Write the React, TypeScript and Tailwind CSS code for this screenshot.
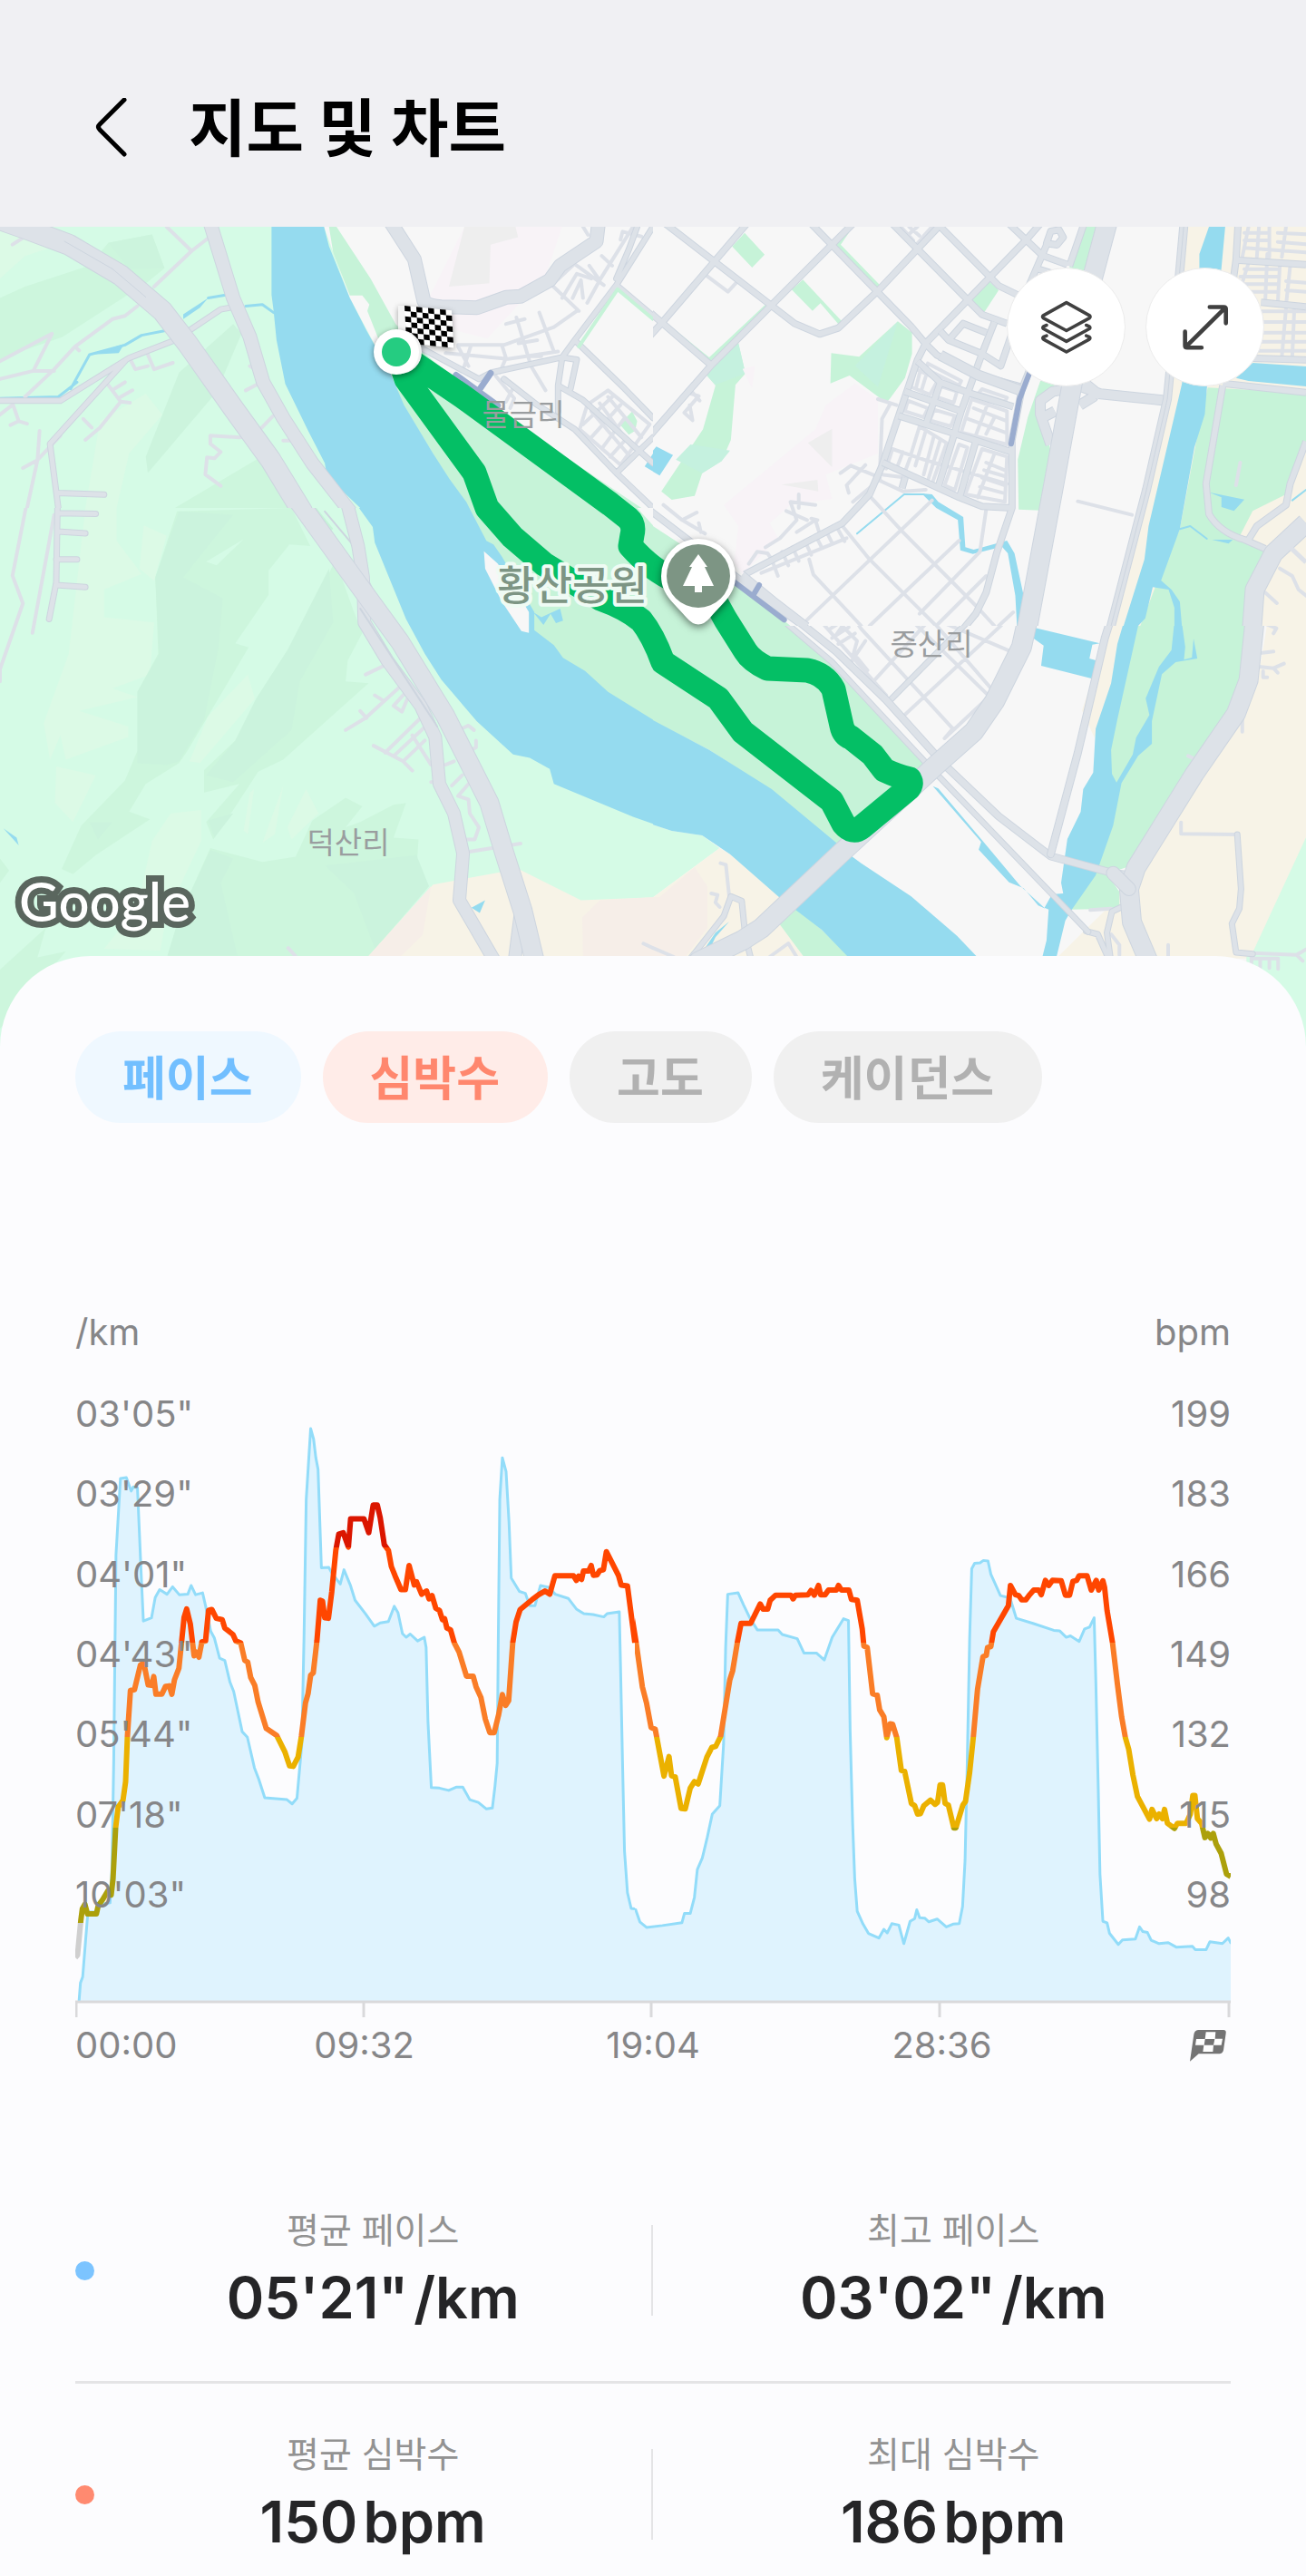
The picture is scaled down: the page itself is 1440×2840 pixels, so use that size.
import { useState } from "react";
import clsx from "clsx";

type Series = "pace" | "heart" | "altitude" | "cadence";

const CHIPS: { id: Series; label: string; on: string }[] = [
  { id: "pace", label: "페이스", on: "bg-[#eff8ff] text-[#72bfff]" },
  { id: "heart", label: "심박수", on: "bg-[#ffece8] text-[#ff876e]" },
  { id: "altitude", label: "고도", on: "bg-[#e9f7ec] text-[#5fbf77]" },
  { id: "cadence", label: "케이던스", on: "bg-[#f3eefe] text-[#9d7bea]" },
];

const PACE_TICKS = ["03'05\"", "03'29\"", "04'01\"", "04'43\"", "05'44\"", "07'18\"", "10'03\""];
const BPM_TICKS = ["199", "183", "166", "149", "132", "115", "98"];

const STATS = [
  {
    dot: "bg-[#7cc4ff]",
    items: [
      { label: "평균 페이스", value: "05'21\"", unit: "/km" },
      { label: "최고 페이스", value: "03'02\"", unit: "/km" },
    ],
  },
  {
    dot: "bg-[#ff8a70]",
    items: [
      { label: "평균 심박수", value: "150", unit: "bpm" },
      { label: "최대 심박수", value: "186", unit: "bpm" },
    ],
  },
];

// each half of the run is recorded in its own x scale, y is shared
const PACE_A =
  "66,1386 70,1345 76,1332 90,1192 114,1192 122,1175 150,1172 155,1100 160,860 166,420 178,255 194,253 207,282 213,273 224,275 234,460 240,563 262,556 272,512 284,495 304,505 319,489 337,506 360,505 369,486 381,506 400,502 408,530 422,585 432,600 446,643 460,648 474,695 484,715 507,802 521,814 540,880 552,905 568,945 628,949 642,958 655,946 668,830 674,600 680,300 692,147 700,170 706,210 712,235 721,448 741,447 750,460 772,483 782,452 800,487 812,518 840,547 864,574 880,567 902,564 918,531 928,545 940,590 950,598 961,591 981,606 999,598 1004,620 1009,780 1018,923 1040,924 1065,929 1085,922 1103,922 1122,949 1145,955 1167,969 1183,967 1190,920 1196,870 1199,600 1203,300 1210,210 1220,240 1228,350 1234,470 1256,499 1272,503 1284,530 1298,530 1313,486 1335,490 1353,505 1388,514 1410,537 1430,547 1455,549 1484,554 1493,547 1526,543 1529,650 1535,880 1540,1060 1548,1150 1558,1184 1568,1185";
const PACE_B =
  "0,543 6,543 12,840 20,1080 32,1184 46,1187 56,1213 72,1225 110,1221 157,1215 163,1195 177,1195 187,1160 194,1100 206,1075 218,1030 230,980 248,962 257,830 262,620 267,505 292,502 305,528 320,556 338,582 388,582 398,592 434,601 450,632 480,632 499,647 518,598 545,558 557,562 561,800 567,1000 572,1120 578,1190 592,1218 605,1238 630,1248 642,1229 650,1237 661,1217 678,1220 690,1260 705,1212 716,1206 721,1187 728,1204 740,1205 750,1213 770,1207 792,1224 808,1218 823,1217 831,1180 837,1080 842,880 848,600 853,450 860,438 873,437 881,432 892,433 899,462 912,488 922,508 945,513 960,557 1000,568 1050,583 1064,584 1080,598 1090,595 1111,607 1124,580 1136,576 1147,556 1151,690 1157,930 1161,1110 1168,1212 1178,1215 1184,1238 1205,1262 1215,1252 1246,1250 1256,1224 1264,1234 1275,1236 1284,1253 1303,1260 1325,1258 1345,1268 1383,1266 1390,1273 1416,1273 1425,1256 1455,1260 1469,1248 1476,1260";
const HEART_A =
  "56,1290 62,1285 71,1210 75,1185 82,1175 89,1196 113,1196 118,1178 130,1165 145,1145 153,1155 158,1120 165,1010 172,965 185,950 192,910 197,810 205,713 216,711 232,658 241,653 253,701 262,702 268,683 274,721 290,721 300,704 310,703 317,721 324,690 336,665 343,610 350,555 357,537 367,570 377,638 383,630 390,641 398,608 408,606 416,540 425,538 437,557 453,560 460,578 482,592 490,606 503,610 514,648 522,652 530,685 541,702 550,738 572,795 600,810 622,845 635,876 645,877 658,857 667,812 678,740 685,720 692,680 699,675 709,605 718,518 724,520 730,556 740,557 749,500 760,410 768,375 780,372 794,403 800,342 836,342 849,372 861,312 872,312 880,340 891,398 902,410 910,445 920,465 936,495 948,495 958,443 972,485 978,478 992,505 1005,498 1012,515 1020,508 1030,535 1040,540 1048,560 1054,558 1060,578 1070,582 1080,610 1093,630 1113,682 1131,682 1139,705 1152,728 1164,775 1176,804 1188,804 1200,765 1210,722 1219,745 1227,735 1238,610 1247,565 1258,538 1290,517 1308,506 1325,498 1338,505 1352,465 1402,465 1410,475 1416,466 1424,473 1429,455 1443,455 1450,443 1456,464 1466,463 1473,454 1483,452 1491,413 1524,465 1531,485 1548,487 1568,610";
const HEART_B =
  "0,455 10,485 25,487 47,609 62,705 72,740 83,793 93,797 104,850 114,898 126,856 132,897 141,900 155,968 165,969 177,924 187,910 196,915 217,857 229,836 238,834 250,812 272,690 279,670 290,610 299,568 322,568 345,526 352,537 363,537 369,518 382,507 419,507 424,515 430,507 460,506 467,497 475,507 485,486 490,506 501,506 509,496 528,496 533,486 540,496 558,496 564,516 578,518 590,580 594,617 602,620 615,720 626,723 632,755 642,770 649,815 657,785 663,786 673,815 684,886 692,888 708,957 716,962 723,980 730,979 738,962 754,950 765,959 771,955 777,917 783,917 789,957 797,961 810,1010 815,1010 832,960 838,953 848,890 857,812 867,710 880,640 888,637 891,620 899,618 905,586 941,530 946,486 958,506 966,508 973,517 983,517 991,507 1002,496 1014,496 1020,506 1030,475 1038,486 1047,475 1068,476 1078,507 1088,507 1096,477 1105,475 1111,465 1130,465 1140,496 1152,475 1158,496 1168,476 1172,490 1178,540 1191,609 1203,700 1213,770 1222,815 1230,840 1240,895 1251,942 1280,991 1286,970 1297,990 1303,980 1311,990 1316,970 1323,1000 1340,1011 1347,1000 1368,1000 1378,980 1384,940 1389,940 1395,990 1405,1000 1413,1031 1420,1022 1427,1032 1433,1022 1440,1045 1452,1065 1465,1110 1475,1115";

const HALVES = [
  { x: 0, width: 617, viewBox: "56 0 1512 1431", pace: PACE_A, heart: HEART_A, from: 66, to: 1568 },
  { x: 617, width: 657, viewBox: "44 0 1431 1431", pace: PACE_B, heart: HEART_B, from: 0, to: 1476 },
];

// heart rate zones, top to bottom
const ZONES = [
  { color: "#db1600", from: 0, to: 404 },
  { color: "#ff4600", from: 404, to: 609 },
  { color: "#fa7d27", from: 609, to: 814 },
  { color: "#ebb100", from: 814, to: 1010 },
  { color: "#aca00b", from: 1010, to: 1216 },
  { color: "#cfcfcf", from: 1216, to: 1431 },
];

const ROUTE =
  "M438 388 L510 437 L673 556 L692 571 Q700 578 697 590 L695 602 Q720 630 745 640 L790 665 L800 683 L822 718 Q828 728 846 737 L890 739 Q910 743 919 760 L928 800 Q930 810 938 813 L962 832 L975 849 Q990 856 1003 859 Q1006 864 1002 869 L950 912 Q940 920 930 908 L917 883 L819 807 L792 770 L731 730 Q720 700 707 684 Q690 670 662 660 L600 622 L565 592 L537 560 L523 521 L448 418 Z";

function Road({ d, w = 5 }: { d: string; w?: number }) {
  return (
    <>
      <path d={d} stroke="#cdd5df" strokeWidth={w + 2} />
      <path d={d} stroke="#dde2e8" strokeWidth={w} />
    </>
  );
}

function TileNW() {
  return (
    <>
      <rect y="700" width="1568" height="868" fill="#d5fbe6" />
      <path fill="#cdf6dd" d="M0 920 L60 885 L215 820 L260 750 L365 724 L395 828 L355 870 L150 1040 L60 1080 L0 1110Z M420 1568 L640 1400 L700 1568Z" />
      <path fill="#ccf4dd" d="M355 1460 L350 1410 L430 1150 L560 1000 L580 1030 L520 1210Z M260 750 L365 724 L395 828 L310 830Z" />
      <path fill="#dcfae6" d="M0 860 L60 790 L180 740 L100 700 H0Z M205 1568 L240 1300 L350 1215 L390 1280 L310 1400 L280 1568Z" />
      <path fill="#f7f7f7" d="M778 700 H1568 V1568 H1125 L940 1160 L840 920Z" />
      <path fill="#f8f3f7" d="M1115 700 H1350 L1310 850 L1170 1045 L1095 1020 L1030 920Z" />
      <path fill="#eee" d="M1115 700 H1238 L1244 732 L1178 755 L1175 874 L1078 885Z" />
      <path fill="#c6f3d8" d="M790 700 H808 L890 860 L950 1000 L1010 1080 L1110 1190 L1230 1300 L1540 1568 H1100 L1040 1400 L930 1170 L940 1110 L910 1050 L882 960 L887 940 L870 912 L840 912 L800 780Z M1488 1310 L1518 1270 L1530 1300 L1525 1330 L1510 1342Z" />
      <path fill="#95dbef" d="M652 700 H778 L790 760 L840 920 L880 1020 L940 1160 L970 1250 L1040 1400 L1080 1480 L1120 1550 L1127 1568 H865 L785 1470 L780 1430 L740 1330 L685 1185 L664 1050 L657 960 L652 910Z M1568 1400 L1548 1440 L1568 1455Z M215 1095 L298 1062 L285 1090Z M440 970 L500 920 L480 950 L440 985Z" />
      <path stroke="#95dbef" strokeWidth="3" d="M500 920 L545 910 M590 945 L630 940 L657 965 M170 1200 L215 1095 L300 1065 L340 1035 L400 1020 M0 1230 L140 1225 L185 1180" />
      <g stroke="#dde1e8" strokeWidth="4">
        <path d="M30 755 L60 730 M400 700 L460 775 L500 735 M460 775 L370 885 M330 945 L300 975 L270 985 L180 1070 L130 1140 L60 1225 M0 1115 L125 1030 L80 1145 H130 M0 1170 L80 1145 M180 1070 L190 1082 M355 1095 L370 1140 L415 1120 M315 1115 L325 1140 L355 1130 M255 1180 L290 1240 L240 1320 L205 1358 M290 1240 L312 1243 M200 1293 L220 1320 M275 1200 L300 1180 M290 1225 L318 1205 M30 1245 L45 1300 L25 1312 M45 1300 L65 1308 M0 1280 L30 1250 M95 1330 L90 1420 L55 1445 M90 1420 L65 1568 M145 1345 L90 1420 M655 1285 L610 1345 L575 1350 L505 1345 V1370 L530 1395 L515 1415 L497 1412 L493 1465 L530 1500 M590 1205 L620 1185 M600 1130 L612 1140 M680 1360 H705" />
        <path d="M1380 815 L1450 880 M1325 880 L1390 960 M1375 820 L1325 880 M1350 920 L1385 845 L1420 860 M1375 920 L1395 865 L1400 920 M1400 700 L1412 725 M1445 790 L1470 820 M1415 820 L1440 865 M1520 700 L1440 865 L1410 935 M1490 740 L1495 715 L1540 730 M1100 1065 L1210 1065 L1330 1010 L1385 960 M1070 1090 L1220 1108 L1340 1085 M1100 1070 L1125 1130 M1130 1070 L1115 1130 M1205 1065 L1215 1105 L1200 1150 M1240 980 L1275 1130 L1310 1205 M1295 965 L1330 1085 M1215 1000 L1260 985 M1245 1060 L1290 1050 M1270 1100 H1300" />
        <path d="M1410 1250 L1460 1205 L1560 1310 L1490 1435 L1392 1325Z M1420 1270 L1510 1405 M1440 1245 L1520 1385 M1460 1225 L1540 1350 M1400 1310 L1470 1225 M1420 1350 L1490 1250 M1445 1385 L1500 1290 M1465 1410 L1500 1360" />
        <path d="M1190 1160 L1235 1230 L1225 1260 M1235 1190 L1215 1240" />
      </g>
      <Road w={5} d="M0 1237 H145 L310 1105 L420 1050 L530 955 L560 948 M300 1115 L120 1370 L140 1568 M140 1522 L250 1527" />
      <Road w={5} d="M1005 1070 L1150 1170 L1180 1150 L1350 1103 L1380 1050 L1480 880 L1568 700 M1350 1103 L1340 1190 L1400 1235 L1568 1430 M1480 880 L1568 975 M1380 1050 L1500 1200 L1568 1290 M1210 1170 L1290 1250 L1380 1325 L1480 1460 L1568 1568 M1480 1460 L1568 1350 M1350 1103 L1385 1110 L1370 1200 M1480 860 L1510 770 L1530 700 M1340 1190 V1270" />
      <path stroke="#c6f3d8" strokeWidth="4" d="M1390 1070 L1483 893 L1568 985" />
      <Road w={22} d="M-40 660 L60 705 L165 755 L290 850 L390 960 L450 1060 L560 1260 L650 1420 L725 1578" />
      <path stroke="#cdd5df" strokeWidth="1" d="M155 745 L270 830 L350 917" />
      <Road w={14} d="M505 690 L560 920 L600 1040 L632 1180 L680 1290 L750 1430 L840 1578" />
      <Road w={14} d="M940 690 L995 800 L1018 930 Q1030 945 1060 947 L1145 950 L1215 918 L1250 915 L1320 865 L1345 820 L1432 745 L1437 690" />
      <path stroke="#9aaccf" strokeWidth="7" d="M1095 1158 L1195 1252 M1150 1205 L1178 1152" />
    </>
  );
}

function TileNE() {
  return (
    <>
      <rect y="30" width="1568" height="1320" fill="#f7f7f7" />
      <path fill="#f7f3e7" d="M1285 30 H1568 V1350 H1100 L1200 800 L1240 520Z" />
      <path fill="#c6f3d8" d="M1332 562 L1568 580 V760 L1520 915 L1440 970 L1410 1050 L1465 1095 V1140 L1425 1230 L1420 1350 H1170 L1215 1190 L1265 1030 L1310 700Z M0 1020 L200 1200 L330 1350 H0Z" />
      <path fill="#c6f3d8" d="M190 95 L220 50 L268 122 L238 165Z M333 238 L360 205 L455 345 L445 352 L402 283 L383 308Z M760 270 L805 208 L830 240 L793 318Z M428 448 L495 460 L588 343 L622 380 V450 L605 530 L568 600 L560 612 L472 522 L426 548Z M128 520 L205 415 L222 515 L198 553 L187 735 L165 805 L118 845 L100 920 L45 933 L20 905 L120 700 L150 555Z M1030 30 H1070 L1035 180 L1000 165Z M930 540 L980 540 L920 600 L955 770 L930 968 L878 965 L876 800 L900 660Z" />
      <path fill="#c5f1df" d="M588 343 L540 560 L485 490Z M205 415 L222 515 L150 553 L128 520Z M90 750 L185 770 L165 805 L118 845 L55 800Z" />
      <path fill="#f8f3f7" d="M485 548 L540 600 V780 L415 850 L430 930 L330 950 L280 1010 L300 1060 L215 1180 L195 1140 L205 1020 L170 950 L390 700 L415 620Z M215 500 L245 490 L238 565Z" />
      <path fill="#eee" d="M372 745 L430 698 V825Z M308 883 L395 867 L397 905Z" />
      <path stroke="#c6f3d8" strokeWidth="4" d="M475 30 L445 90 L540 225 M0 320 L135 470 L270 295" />
      <path fill="#95dbef" d="M1335 30 H1374 L1365 165 L1330 564 L1325 650 L1300 760 L1265 1030 L1220 1200 L1245 1230 L1265 1270 L1270 1350 H1252 L1252 1290 L1238 1230 L1200 1222 L1182 1325 L1165 1350 H1130 L1180 1130 L1190 1020 L1270 550 L1312 165 V120Z M1400 530 L1440 480 L1568 492 V558 L1430 540Z M0 770 L8 757 L48 785 L16 853 L0 840Z M1335 908 L1420 932 L1395 970 L1365 957 V925Z M1342 1065 H1392 L1382 1078Z M645 912 L670 915 L685 940 L745 990 L750 1090 L770 1098 L850 1068 L868 1110 L890 1250 L882 1350 H874 L870 1250 L852 1110 L838 1088 L768 1112 L738 1100 L732 1000 L680 960Z" />
      <path stroke="#95dbef" strokeWidth="2" d="M490 1045 L603 915 H650 M1265 1030 L1290 1020 L1330 1062 M1535 935 L1568 900" />
      <g stroke="#dde1e8" strokeWidth="4">
        <path d="M127 190 L180 245 L200 215 M90 570 L112 605 M85 580 L110 590 L75 645 L95 670 L88 620 M540 600 L585 620 M568 620 L550 665 L545 830 M450 845 L475 820 L545 860 M510 818 L465 885 L470 910 M545 865 L480 940 M25 950 L70 1000 L105 975 M70 1000 L125 1045 M110 1010 L115 1040 M230 1145 L250 1105 L275 1110 L285 1130 M270 1090 L305 1060 L345 1000 L330 940 L390 950 M350 915 V960 M320 970 L370 1000 M345 1040 L390 1000 L400 1045 M380 995 L395 1000" />
        <path d="M260 1175 L465 1060 M285 1130 L300 1185 M310 1105 L325 1150 M335 1090 L350 1135 M365 1070 L380 1115 M390 1050 L405 1090 M415 1035 L430 1075 M440 1020 L460 1070" />
        <path d="M455 1020 L520 1130 L680 1350 M520 920 L600 1040 L780 1290 L820 1350 M670 935 L370 1330 M735 1068 L520 1350 M800 1185 L680 1350 M375 1130 L385 1180 L500 1350 M800 965 L785 1105 L640 1310 M865 1305 L830 1350 M595 30 L625 75 M615 30 L640 60 M650 60 L670 30 M610 60 L635 30 M635 85 L665 40" />
        <path d="M630 500 L620 560 L665 585 L685 535Z M640 515 L632 560 M655 525 L645 570 M660 482 L740 540 L735 555 L655 500Z M685 555 L730 575 L722 612 L675 590Z M612 605 L660 630 L650 660 L605 640Z M675 635 L725 655 L715 690 L665 670Z M765 600 L850 640 V750 L740 710Z M805 610 L775 720 M770 630 L845 670 M755 665 L845 710 M820 660 L800 715 M790 567 L850 595 L845 608 L782 580Z M640 690 L705 745 L670 880 M640 690 L620 780 M655 705 L630 820 M675 720 L650 850 M690 735 L660 870 M575 765 L650 800 L850 880 M575 765 L560 830 M600 775 L585 830 M620 785 L605 840 M735 750 L755 760 L725 900 L700 885Z M790 765 L850 790 L845 940 L750 915Z M820 780 L780 925 M800 810 L845 835 M795 835 L845 855 M790 860 L845 885 M785 890 L840 910 M550 850 L610 860 M545 870 L600 905 L655 900" />
        <path d="M1430 30 L1415 130 M1455 30 L1450 130 M1480 30 V130 M1520 30 L1510 130 M1420 50 H1475 M1420 75 H1475 M1420 100 L1568 115 M1500 50 L1568 55 M1500 80 L1568 88 M1430 150 L1400 280 M1475 120 L1470 280 M1505 160 L1500 290 M1530 160 L1520 290 M1420 170 H1500 M1410 195 H1500 M1410 220 H1500 M1405 245 H1500 M1520 210 L1568 215 M1520 240 L1568 245 M1520 300 L1510 460 M1460 310 H1568 M1460 345 H1568 M1455 380 H1568 M1450 410 H1568 M1450 440 H1568 M1540 300 L1535 460 M1410 810 L1400 885 M1020 938 L1150 983" />
      </g>
      <path stroke="#dde1e8" strokeWidth="4" d="M1505 1160 L1535 1185 L1550 1230 L1568 1250 M1470 1240 L1498 1275" />
      <g strokeLinecap="butt">
        <Road w={6} d="M30 20 L340 350 L400 385 L445 365 L540 242 L720 -20 M225 20 L20 350 L-10 395 M-10 310 L140 488 M-10 725 L140 488 L480 20 M380 20 L620 360 L655 418 L682 455 L780 520 L885 560 M575 20 L790 320 L850 350 M690 30 L830 225 L875 255 M855 20 L935 125 L995 155 M930 20 L895 75 L655 415 L635 470 L550 820 L520 915 L455 1010 L220 1180 M1035 20 L1000 160 M955 45 L975 40 L985 65 L970 90 L945 85Z M945 90 L895 250 M925 170 L960 185" />
        <Road w={6} d="M552 810 L735 925 L790 955 L862 960 M862 740 V960 L825 1110 L800 1240 L775 1310 L745 1360 M905 500 L885 570 L860 750 M635 475 L690 545 L760 580 L865 625 M605 575 L740 640 M590 655 L862 775 M690 545 L655 685 M820 345 L790 450 L740 640 L685 890 M775 740 L735 930 M690 375 L710 405 L790 450 L835 490 L860 390 M710 405 L745 350 L800 380 M605 860 L598 895 M-10 965 L240 1230 L370 1360 M215 1180 L290 1265 L370 1350 M1405 20 L1400 140 L1568 155 M1400 140 L1390 240 M1460 280 L1568 295 M1440 465 L1568 470 M1368 548 L1568 578 M1368 555 L1328 880 L1335 980 Q1360 1040 1420 1065 L1470 1095 M1430 1065 L1450 1020 L1520 950 L1530 880 L1568 740" />
        <Road w={10} d="M690 455 L780 520 L880 570" />
        <Road w={10} d="M1030 560 L1075 583 L1232 605 M1025 620 L1060 590 M1000 565 L960 575 L930 605 V650 L955 750 M965 640 L930 665 M1030 540 L1075 590" />
        <Road w={8} d="M1275 20 L1262 220 L1235 600 L1185 900 L1098 1360" />
        <path stroke="#cdd5df" strokeWidth="1" d="M1275 20 L1262 220 L1235 600 L1185 900 L1098 1360" />
        <Road w={21} d="M1090 20 L1055 200 L1005 560 L960 900 L898 1360" />
        <Road w={20} d="M1568 1010 L1490 1110 L1445 1230 L1438 1360" />
        <path stroke="#dde1e8" strokeWidth="5" d="M1530 1090 L1568 1140" />
      </g>
      <path stroke="#9aaccf" strokeWidth="6" d="M905 510 L880 600 L860 748 M195 1205 L315 1330 M240 1250 L255 1215" />
    </>
  );
}

function TileSW() {
  return (
    <>
      <rect width="1568" height="1568" fill="#d5fbe6" />
      <path fill="#dcfae6" d="M205 0 H280 V95 L340 190 L250 235 V315 L370 330 L360 480 L270 520 L330 545 L190 585 L308 630 V660 L158 725 L145 655 L120 725 L105 620 L165 420Z M595 480 L612 550 L480 735 L455 730 L500 600Z M410 880 L483 870 V960 L400 1170 L385 1275 L250 1270 L330 1150 L365 960Z M135 745 L230 770 L175 905 L132 850Z M345 50 L400 80 L370 210 L335 175Z" />
      <path fill="#cdf6dd" d="M425 10 L700 0 L745 110 L695 105 L645 180 V250 L565 390 L597 402 L450 700 L430 735 L350 795 L310 875 L360 897 L230 1000 L175 1055 L148 1040 L195 915 L300 785 L330 700 V530 L380 420 L373 200Z M805 150 L850 300 L870 360 L835 440 L830 500 L885 505 L680 725 L620 760 L560 870 L512 955 L495 905 L575 795 L490 820 V755 L565 670 L615 550 L690 410 L720 370Z M505 980 L630 1020 L710 1005 L750 900 L830 835 L870 860 L830 920 L865 905 L945 855 L975 850 L945 950 L1005 955 L1000 1045 L1030 1090 L885 1295 H402 L430 1180Z M0 1010 L22 1045 L0 1080Z M0 1330 L110 1210 L90 1295 L158 1278 L0 1500Z" />
      <path fill="#cbf3dd" d="M430 10 L560 20 L440 200 L535 260 L525 400 L490 610 L430 730 L400 740 L330 735 V530 L382 420 L373 200Z M790 175 L800 330 L720 500 L700 640 L560 790 L495 770 L565 670 L615 550 L690 410Z M505 985 L560 1010 L530 1080 L570 1290 H402 L430 1180Z M215 905 L270 905 L235 955Z M780 1030 L1000 1000 L1030 1090 L900 1270 L850 1110Z M500 900 L560 880 L515 950Z" />
      <path fill="#d5fbe6" d="M495 155 L585 90 L520 165Z" />
      <path fill="#dcfae6" d="M600 820 L610 810 L595 940 L585 930Z M680 800 L660 940 L630 965Z M735 810 L765 880 L700 955 L690 920Z" />
      <path fill="#f7f3e7" d="M882 1295 L1040 1085 L1245 1040 L1395 1130 L1568 1122 V1300Z" />
      <path fill="#f6eee8" d="M882 1295 L1035 1090 L1015 1230 L960 1295Z M1398 1180 L1440 1130 L1568 1122 V1295 H1400Z" />
      <path fill="#c6f3d8" d="M1125 0 H1568 V615 L1460 532 L1283 400 L1150 60Z M760 0 L800 60 L790 70 L750 0Z" />
      <path fill="#95dbef" d="M862 0 H1127 L1168 95 L1185 105 L1205 140 L1283 300 V352 L1330 395 L1352 432 L1405 470 L1460 530 L1568 610 V910 L1520 890 L1330 795 L1320 752 L1272 720 L1232 710 L1145 615 L1060 495 L1020 420 L975 320 L900 100 L895 55Z M1280 300 L1300 315 L1345 290 L1352 325 L1335 332 L1322 305 L1305 337Z M8 923 L40 950 L45 972Z M1132 1152 L1165 1130 L1152 1167Z" />
      <path fill="#f7f7f7" d="M1162 125 L1195 160 L1240 240 L1270 300 V360 L1252 355 L1205 270 L1165 175Z M1530 0 H1568 V50Z" />
      <g stroke="#dde1e8" strokeWidth="4">
        <path d="M62 0 L30 195 L55 275 L0 465 V500 M130 20 L78 360 M930 450 L878 480 M965 510 L878 605 L830 640 M900 540 L920 555 M865 585 L880 605 M975 530 L945 570 L965 587 L980 545 M1010 605 L925 705 M1030 620 L945 715 M1020 670 L968 730 M897 685 L968 730 L990 757 M990 655 L1035 740 M1110 635 L1125 627 L1138 640 M1143 670 V690 L1120 705 L1140 718 M1070 740 L1090 730 M1110 770 L1085 800 M1035 790 H1050 M1125 795 L1100 830 L1125 840 L1128 880 L1150 920 L1140 955 H1120 M1130 990 L1250 967 M692 1268 L710 1292 M1545 1255 L1568 1268" />
        <path stroke="#cdd5df" strokeWidth="2" d="M780 10 L850 110 L880 200 L935 330 M965 385 L1110 640" />
      </g>
      <Road w={5} d="M138 0 L135 215 L118 320 M140 15 L230 17 M140 68 L205 73 M135 148 H185 M135 222 L205 228" />
      <Road w={13} d="M832 -20 L860 110 L872 200 L875 330 L930 440 L1010 570 L1045 660 L1055 795 L1090 880 L1112 995 L1103 1130 L1190 1310 M1250 1170 L1235 1310" />
      <Road w={20} d="M710 -30 L860 220 L960 385 L1070 600 L1175 850 L1210 990 L1255 1160 L1285 1310" />
      <path stroke="#cdd5df" strokeWidth="2" d="M865 290 L1050 630" />
    </>
  );
}

function TileSE() {
  return (
    <>
      <rect y="150" width="1568" height="1410" fill="#f7f7f7" />
      <path fill="#d5fbe6" d="M0 808 L45 828 L118 843 L160 885 L0 1048Z" />
      <path fill="#f7f3e7" d="M160 885 L185 905 L345 1090 L305 1135 L365 1250 H0 V1048Z M1480 100 L1450 350 L1090 1085 L968 1250 H1568 V100Z M1128 100 L1098 150 L1030 430 L1060 520 L1170 100Z" />
      <path fill="#f6eee8" d="M0 1048 L15 1048 L100 948 L130 1010 V1150 L75 1250 H0Z" />
      <path fill="#d5fbe6" d="M1568 850 L1440 1230 L1425 1245 V1560 H1568Z" />
      <path fill="#c6f3d8" d="M0 100 H285 L430 270 L662 610 L450 880 L280 690 L135 560 L0 465Z M345 1085 L405 1155 L475 1250 H365 L303 1135Z M1165 100 H1430 L1410 320 L1375 440 L1300 590 L1150 920 L1145 945 L1090 970 L1120 1030 V1085 L1000 1088Z" />
      <path fill="#95dbef" d="M0 462 L135 560 L285 690 L390 810 L447 875 L480 915 L500 935 L620 1045 L730 1175 L782 1250 H472 L405 1155 L305 1050 L185 905 L118 843 L45 828 L0 808Z M1160 0 L1115 210 L1100 340 L1063 490 L1057 635 L1033 690 L1027 765 L995 855 L980 1000 L985 1035 L958 1038 L940 1082 L950 1088 L945 1190 L934 1250 H968 L990 1125 L1005 1090 L1063 975 L1105 810 L1125 670 L1165 580 L1198 540 V465 L1222 310 L1255 270 L1307 258 L1298 192 L1294 255 L1275 262 L1278 220 L1262 60Z M918 157 L1073 208 L1055 212 L1048 258 L1065 265 L1055 325 L932 282 L938 215 L912 190Z M672 680 L685 688 L792 862 L882 1010 L942 1085 L925 1075 L890 1018 L855 998 L782 890 L788 865Z M122 1222 L150 1165 L183 1128 L150 1180 L135 1222Z M868 100 H882 V130Z" />
      <path fill="#c6f3d8" d="M1240 30 L1255 95 L1245 230 L1215 285 L1183 390 L1192 445 L1160 520 L1152 575 L1113 668 L1102 640 L1100 560 L1115 460 L1165 150 L1182 125 L1200 20Z" />
      <g stroke="#dde1e8" strokeWidth="4">
        <path d="M470 100 L500 160 L720 490 L700 522 L810 380 M630 100 L860 235 M650 100 L820 370 M560 380 L400 130 M870 105 L600 450 M690 90 L525 340 M590 90 L820 400 M425 160 L465 125 M430 190 L470 155 M445 210 L485 175 M440 130 L490 200 L480 250 M465 130 L440 180 M510 200 L475 270 M490 255 L515 297 M365 130 L390 100" />
        <path d="M1470 50 L1498 75 M1465 140 L1497 158 L1490 175 M1458 240 L1490 235 M1455 285 L1490 290 L1515 275 M1490 290 L1500 305 M1465 300 V320 H1475 M1415 460 V500 M1285 580 L1300 590 M1268 800 V838 L1400 840 M1237 1205 V1245 M162 935 L175 940 L183 1045 M140 1035 L155 1040 L150 1065 L160 1080 M280 1245 L325 1200 L345 1245 M0 1215 L50 1245 M1100 1170 L1120 1205 V1240 M1050 1090 L1100 1085 M1440 1232 L1545 1238 L1568 1220 M1545 1238 L1560 1258 M1437 1235 V1265 M1458 1250 V1280 M1480 1250 V1282 M1501 1250 V1285 M1437 1250 H1501" />
      </g>
      <Road w={5} d="M570 395 L775 110 L790 60 M1403 840 L1412 1020 L1408 1085 L1390 1135 L1400 1230 L1440 1235 M90 1250 L170 1110 L187 1045 L213 1060 L222 1180 L235 1250 M1125 1080 L1102 1095 L1090 1165 L1098 1245 M1040 1160 L1068 1170 L1092 1245" />
      <Road w={5} d="M285 100 L430 270 L660 610 L960 1040 L1045 1162" />
      <Road w={7} d="M255 30 L440 235 L560 395 L700 610 L830 780 L955 912 L1105 968 L1150 975" />
      <Road w={7} d="M1128 0 L1085 190 L1020 570 L955 905" />
      <Road w={21} d="M920 0 L885 220 L820 400 L770 500 L680 610 L460 890 L260 1150 L215 1190 L110 1260" />
      <Road w={20} d="M1455 0 L1430 330 L1400 440 L1300 640 L1160 950 L1143 1020 L1150 1130 L1190 1260" />
      <Road w={14} d="M1105 968 L1143 1020" />
    </>
  );
}

const TILES = [
  { x: 0, y: 250, w: 720, h: 310, viewBox: "0 700 1568 868", Tile: TileNW },
  { x: 720, y: 250, w: 720, h: 440, viewBox: "0 30 1568 1320", Tile: TileNE },
  { x: 0, y: 560, w: 720, h: 600, viewBox: "0 0 1568 1568", Tile: TileSW },
  { x: 720, y: 690, w: 720, h: 470, viewBox: "0 150 1568 1410", Tile: TileSE },
];

function FinishFlag() {
  const cells = [];
  for (let row = 0; row < 7; row++) {
    for (let col = 0; col < 8; col++) {
      if ((row + col) % 2 === 0) {
        cells.push(<rect key={`${row}-${col}`} x={col * 6.5} y={row * 6.3} width="6.5" height="6.3" />);
      }
    }
  }
  return (
    <g className="drop-shadow-[0_2px_3px_rgb(0_0_0/0.35)]">
      <path d="M439 337 H447 V390 H439Z" fill="#f4f4f4" />
      <g transform="matrix(1 .1 .05 .94 446 337)">
        <rect width="52" height="44" fill="#fff" />
        {cells}
      </g>
    </g>
  );
}

function RouteMap() {
  return (
    <svg
      viewBox="0 250 1440 910"
      role="img"
      aria-label="지도"
      className="block w-full font-['Noto_Sans_CJK_KR','Noto_Sans',sans-serif] [&_path]:[vector-effect:non-scaling-stroke]"
    >
      {TILES.map(({ x, y, w, h, viewBox, Tile }) => (
        <svg
          key={viewBox}
          x={x}
          y={y}
          width={w}
          height={h}
          viewBox={viewBox}
          preserveAspectRatio="none"
          fill="none"
          strokeLinecap="round"
          strokeLinejoin="round"
        >
          <Tile />
        </svg>
      ))}

      <path d={ROUTE} fill="none" stroke="#04bf65" strokeWidth="27" strokeLinejoin="round" />

      <g fontSize="33" fill="#9a9d9f" textAnchor="middle">
        <text x="577" y="469">물금리</text>
        <text x="1027" y="722">증산리</text>
        <text x="384" y="941">덕산리</text>
      </g>
      <text
        x="631"
        y="662"
        fontSize="45"
        fontWeight="500"
        fill="#7d9584"
        stroke="#effbf4"
        strokeWidth="8"
        strokeLinejoin="round"
        paintOrder="stroke"
        textAnchor="middle"
      >
        황산공원
      </text>

      <FinishFlag />
      <g className="drop-shadow-[0_2px_3px_rgb(0_0_0/0.45)]">
        <circle cx="441" cy="388" r="24" fill="#f1f1f1" />
        <circle cx="437" cy="388" r="25" fill="#fff" />
        <circle cx="437" cy="388" r="16" fill="#25cc81" />
      </g>

      <g className="drop-shadow-[0_3px_4px_rgb(0_0_0/0.5)]">
        <path d="M770 594 A41 41 0 0 1 811 635 C811 657 794 667 783 681 Q770 696 757 681 C746 667 729 657 729 635 A41 41 0 0 1 770 594Z" fill="#fff" />
        <circle cx="770" cy="635" r="35" fill="#7d9584" />
        <path d="M770 611 L780 625 H777 L787 646 H774 V653 H766 V646 H753 L763 625 H760Z" fill="#fff" />
      </g>

      <text
        x="21"
        y="1016"
        fontSize="60"
        fontWeight="500"
        fill="#fff"
        stroke="#5a665e"
        strokeWidth="14"
        paintOrder="stroke"
        className="font-['Lato',sans-serif]"
      >
        Google
      </text>
    </svg>
  );
}

function Chart({ active }: { active: Series[] }) {
  return (
    <svg viewBox="0 0 1274 730" preserveAspectRatio="none" className="block h-[730px] w-full" aria-hidden="true">
      {HALVES.map((half, i) => (
        <svg
          key={half.viewBox}
          x={half.x}
          y="1"
          width={half.width}
          height="730"
          viewBox={half.viewBox}
          preserveAspectRatio="none"
          fill="none"
          strokeLinejoin="round"
        >
          <defs>
            <linearGradient id={`zones-${i}`} gradientUnits="userSpaceOnUse" x1="0" x2="0" y1="0" y2="1431">
              {ZONES.flatMap((zone) => [
                <stop key={`${zone.color}-a`} offset={zone.from / 1431} stopColor={zone.color} />,
                <stop key={`${zone.color}-b`} offset={zone.to / 1431} stopColor={zone.color} />,
              ])}
            </linearGradient>
          </defs>
          {active.includes("pace") && (
            <>
              <polygon points={`${half.from},1386 ${half.pace} ${half.to},1386`} fill="#dff3fe" />
              <polyline points={half.pace} stroke="#92dcf9" strokeWidth="3" className="[vector-effect:non-scaling-stroke]" />
            </>
          )}
          {active.includes("heart") && (
            <polyline
              points={half.heart}
              stroke={`url(#zones-${i})`}
              strokeWidth="6"
              className="[vector-effect:non-scaling-stroke]"
            />
          )}
        </svg>
      ))}
      <path d="M0 708 H1274 M1 708 V725 M318 708 V725 M635 708 V725 M953 708 V725 M1272 708 V725" stroke="#d9d9db" strokeWidth="3" />
    </svg>
  );
}

export default function App() {
  const [active, setActive] = useState<Series[]>(["pace", "heart"]);

  const toggle = (id: Series) =>
    setActive((prev) => (prev.includes(id) ? prev.filter((s) => s !== id) : [...prev, id]));

  return (
    <div className="min-h-screen bg-[#fcfcfe] font-['Inter','Noto_Sans_CJK_KR',sans-serif]">
      <header className="flex items-center bg-[#f0f0f3] pt-24 pb-[62px] pl-[104px]">
        <button type="button" aria-label="뒤로" className="mr-[68px]">
          <svg width="36" height="68" viewBox="0 0 36 68" fill="none" stroke="#000" strokeWidth="5" strokeLinecap="round" strokeLinejoin="round">
            <path d="M33 2 L6 29 Q3 32 6 35 L33 62" />
          </svg>
        </button>
        <h1 className="text-[69px] leading-[92px] font-bold text-black">지도 및 차트</h1>
      </header>

      <main>
        <section className="relative">
          <RouteMap />
          <div className="absolute top-[45px] right-[46px] flex gap-[22px]">
            <button type="button" aria-label="지도 유형" className="flex size-[131px] items-center justify-center rounded-full border border-[#ececec] bg-white">
              <svg width="58" height="61" viewBox="141 150 175 184" fill="none" stroke="#404040" strokeWidth="11" strokeLinecap="round" strokeLinejoin="round">
                <path d="M228 161 L305 204 Q309 208 305 212 L228 254 L151 212 Q147 208 151 204Z" />
                <path d="M162 236 L152 240 Q147 244 152 248 L228 290 L304 248 Q309 244 304 240 L294 236" />
                <path d="M162 271 L152 275 Q147 279 152 283 L228 325 L304 283 Q309 279 304 275 L294 271" />
              </svg>
            </button>
            <button type="button" aria-label="전체 화면" className="flex size-[131px] items-center justify-center rounded-full border border-[#ececec] bg-white">
              <svg width="54" height="54" viewBox="605 162 163 162" fill="none" stroke="#404040" strokeWidth="14" strokeLinecap="round" strokeLinejoin="round">
                <path d="M701 175 H748 Q755 175 755 182 V229 M619 257 V303 Q619 310 626 310 H674 M751 179 L623 306" />
              </svg>
            </button>
          </div>
        </section>

        <section className="relative -mt-[106px] rounded-t-[100px] bg-[#fcfcfe] pt-[83px]">
          <div className="flex gap-6 px-[83px]">
            {CHIPS.map(({ id, label, on }) => (
              <button
                key={id}
                type="button"
                aria-pressed={active.includes(id)}
                onClick={() => toggle(id)}
                className={clsx(
                  "rounded-full pt-[15px] pr-[53px] pb-[10px] pl-[52px] text-[52px] leading-[76px] font-bold whitespace-nowrap",
                  active.includes(id) ? on : "bg-[#f0f0f0] text-[#b1b1b1]"
                )}
              >
                {label}
              </button>
            ))}
          </div>

          <div className="mt-[207px] px-[83px] text-[40px] text-[#868688]">
            <div className="flex justify-between leading-[48px]">
              <span>/km</span>
              <span>bpm</span>
            </div>
            <div className="relative mt-[6px]">
              <Chart active={active} />
              <div className="absolute inset-x-0 top-4 flex h-[618px] justify-between leading-[88px]">
                <ul className="flex flex-col justify-between">
                  {PACE_TICKS.map((tick) => (
                    <li key={tick}>{tick}</li>
                  ))}
                </ul>
                <ul className="flex flex-col justify-between text-right">
                  {BPM_TICKS.map((tick) => (
                    <li key={tick}>{tick}</li>
                  ))}
                </ul>
              </div>
            </div>
            <div className="grid grid-cols-8 text-center leading-[52px]">
              <span className="text-left">00:00</span>
              <span className="col-span-2">09:32</span>
              <span className="col-span-2">19:04</span>
              <span className="col-span-2">28:36</span>
              <svg width="42" height="36" viewBox="36 50 126 108" className="mr-1 self-center justify-self-end">
                <path fill="#747474" d="M66 53 H150 Q160 53 158 64 L150 120 Q147 132 136 132 H68 L39 157 L52 68 Q54 54 66 53Z" />
                <path fill="#fff" d="M92 60 H124 L122 82 H147 L143 103 H117 L115 125 H82 L85 103 H57 L60 83 H89Z" />
                <path fill="#747474" d="M89 83 H121 L117 103 H86Z" />
              </svg>
            </div>
          </div>

          <div className="mt-[100px]">
            {STATS.map(({ dot, items }, i) => (
              <div key={dot}>
                {i > 0 && <hr className="mx-[83px] border-0 border-t-[3px] border-[#e4e4e6]" />}
                <dl className={clsx("grid grid-cols-[21px_12fr_13fr] items-center pt-[46px] pr-14 pl-[83px]", i === 0 ? "pb-[46px]" : "pb-3")}>
                  <span className={clsx("size-[21px] rounded-full", dot)} />
                  {items.map(({ label, value, unit }, col) => (
                    <div key={label} className="relative text-center">
                      {col > 0 && <i className="absolute top-[26px] left-0 h-[100px] w-0.5 bg-[#e4e4e6]" />}
                      <dt className="pt-1 text-[39px] leading-[56px] text-[#929292]">{label}</dt>
                      <dd className="flex items-baseline justify-center gap-[6px] text-[63px] leading-[92px] font-semibold text-[#252527]">
                        <span>{value}</span>
                        <span>{unit}</span>
                      </dd>
                    </div>
                  ))}
                </dl>
              </div>
            ))}
          </div>
        </section>
      </main>
    </div>
  );
}
